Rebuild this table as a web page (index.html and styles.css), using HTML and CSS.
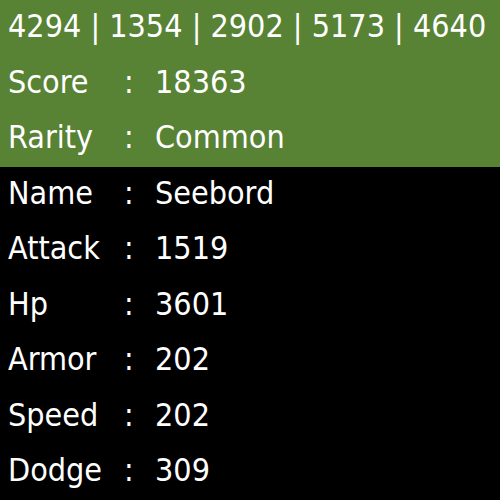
FILE: index.html
```html
<!DOCTYPE html>
<html>
  <head>
    <title>Unit Card</title>
    <link rel="stylesheet" href="styles.css">
  </head>
  <body>
    <div class="card">
      <div class="top">
        <div class="ids">4294 | 1354 | 2902 | 5173 | 4640</div>
        <div class="row"><span>Score</span><span>:</span><span>18363</span></div>
        <div class="row"><span>Rarity</span><span>:</span><span>Common</span></div>
      </div>
      <div class="stats">
        <div class="row"><span>Name</span><span>:</span><span>Seebord</span></div>
        <div class="row"><span>Attack</span><span>:</span><span>1519</span></div>
        <div class="row"><span>Hp</span><span>:</span><span>3601</span></div>
        <div class="row"><span>Armor</span><span>:</span><span>202</span></div>
        <div class="row"><span>Speed</span><span>:</span><span>202</span></div>
        <div class="row"><span>Dodge</span><span>:</span><span>309</span></div>
      </div>
    </div>
  </body>
</html>
```

FILE: styles.css
```css
body {
  margin: 0;
  background: #000;
  color: #fff;
  font-family: "DejaVu Sans Condensed", "DejaVu Sans", sans-serif;
  font-size: 32px;
}

.card {
  width: 500px;
  height: 500px;
  overflow: hidden;
}

.top {
  background-color: #588234;
}

.ids,
.row {
  height: 55.5px;
  line-height: 52px;
  padding-left: 8px;
  white-space: nowrap;
}

.row {
  display: grid;
  grid-template-columns: 116px 31px 1fr;
}
```
